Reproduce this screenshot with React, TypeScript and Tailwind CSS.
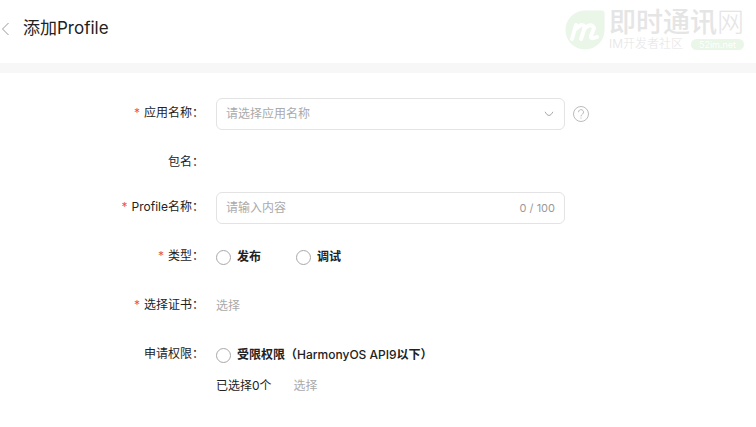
import { useState, type ReactNode } from 'react'

const apps: string[] = []
const types = ['发布', '调试']

function Field({ label, htmlFor, required, compact, children }: {
  label: string
  htmlFor?: string
  required?: boolean
  compact?: boolean
  children?: ReactNode
}) {
  return (
    <div className="flex gap-3">
      <label htmlFor={htmlFor} className="w-[204px] shrink-0 pt-[5px] text-right leading-5">
        {required && <span className="mr-1 text-[#e8574f]">*</span>}
        {label}：
      </label>
      <div className={compact ? 'min-h-7 flex-1' : 'flex min-h-8 flex-1 items-center'}>{children}</div>
    </div>
  )
}

const radioClass = 'size-[15px] shrink-0 appearance-none rounded-full border border-[#a8a8a8] bg-white checked:border-4 checked:border-blue-500'

function Watermark() {
  return (
    <div className="flex gap-1">
      <svg viewBox="0 0 40 40" className="size-10">
        <path d="M20 .5h17q2.500 0 2.500 2.500v17A19.500 19.500 0 1 1 20 .5z" fill="#e9f6e8" />
        <path d="M7 29l4-14M11 19q6-7 9-2l-4 12M19 19q7-7 10-1l-3 8q-1 4 6 1" fill="none" stroke="#fff" strokeWidth="4" strokeLinecap="round" strokeLinejoin="round" />
      </svg>
      <div className="text-[#e5e5e5]">
        <div className="text-[27px] leading-[26px] font-medium">
          即时通讯<span className="font-light">网</span>
        </div>
        <div className="mt-[2px] flex items-center justify-between text-[12px] leading-3">
          <span className="font-light">IM开发者社区</span>
          <span className="h-[11px] w-[53px] rounded-md bg-[#e9f6e8] text-center text-[9px] leading-[11px] text-white">52im.net</span>
        </div>
      </div>
    </div>
  )
}

export default function App() {
  const [name, setName] = useState('')

  return (
    <div className="min-h-screen bg-white font-[Inter,'Noto_Sans_CJK_SC',sans-serif] text-[12px] text-[#222]">
      <header className="flex h-[73px] items-start justify-between border-b-[10px] border-[#f7f7f7] pt-[10px] pr-3">
        <div className="flex h-[38px] items-center gap-3">
          <button aria-label="返回" className="pl-px">
            <svg viewBox="0 0 10 14" className="h-[14px] w-[10px]" fill="none" stroke="#999">
              <path d="M7.500 1L1.500 7l6 6" />
            </svg>
          </button>
          <h1 className="text-[17px]">添加Profile</h1>
        </div>
        <Watermark />
      </header>

      <form className="flex flex-col gap-[17px] pt-[25px]">
        <Field label="应用名称" htmlFor="app" required>
          <div className="relative w-[349px]">
            <select id="app" defaultValue="" className="h-8 w-full appearance-none rounded-md border border-[#e3e3e3] bg-white px-[9px] text-[#aaa]">
              <option value="">请选择应用名称</option>
              {apps.map((app) => <option key={app}>{app}</option>)}
            </select>
            <svg viewBox="0 0 10 6" className="pointer-events-none absolute top-[13px] right-[11px] h-[6px] w-[10px]" fill="none" stroke="#aaa">
              <path d="M1 .8q4 7.500 8 0" />
            </svg>
          </div>
          <button type="button" aria-label="帮助" className="ml-2">
            <svg viewBox="0 0 16 16" className="size-4" fill="none" stroke="#bbb">
              <circle cx="8" cy="8" r="7.500" />
              <path d="M5.500 6.200a2.500 2.500 0 1 1 4 1.900Q8 9 8 10.400M8 11.500v1.200" />
            </svg>
          </button>
        </Field>

        <Field label="包名" compact />

        <Field label="Profile名称" htmlFor="name" required>
          <div className="flex h-8 w-[349px] items-center rounded-md border border-[#e3e3e3] px-[9px]">
            <input
              id="name"
              maxLength={100}
              value={name}
              onChange={(e) => setName(e.target.value)}
              placeholder="请输入内容"
              className="min-w-0 flex-1 outline-none placeholder:text-[#aaa]"
            />
            <span className="text-[11px] text-[#999]">{name.length} / 100</span>
          </div>
        </Field>

        <Field label="类型" required>
          <div className="flex gap-[35px]">
            {types.map((type) => (
              <label key={type} className="flex items-center gap-[6px] font-bold">
                <input type="radio" name="type" value={type} className={radioClass} />
                {type}
              </label>
            ))}
          </div>
        </Field>

        <Field label="选择证书" required>
          <button type="button" className="text-[#aaa]">选择</button>
        </Field>

        <div>
          <Field label="申请权限">
            <label className="flex items-center gap-[6px] font-bold">
              <input type="radio" name="permission" className={radioClass} />
              <span>受限权限（<span className="font-medium">HarmonyOS API9</span>以下）</span>
            </label>
          </Field>
          <div className="flex gap-[22px] pt-[5px] pl-[216px] leading-5">
            <span>已选择0个</span>
            <button type="button" className="text-[#aaa]">选择</button>
          </div>
        </div>
      </form>
    </div>
  )
}
